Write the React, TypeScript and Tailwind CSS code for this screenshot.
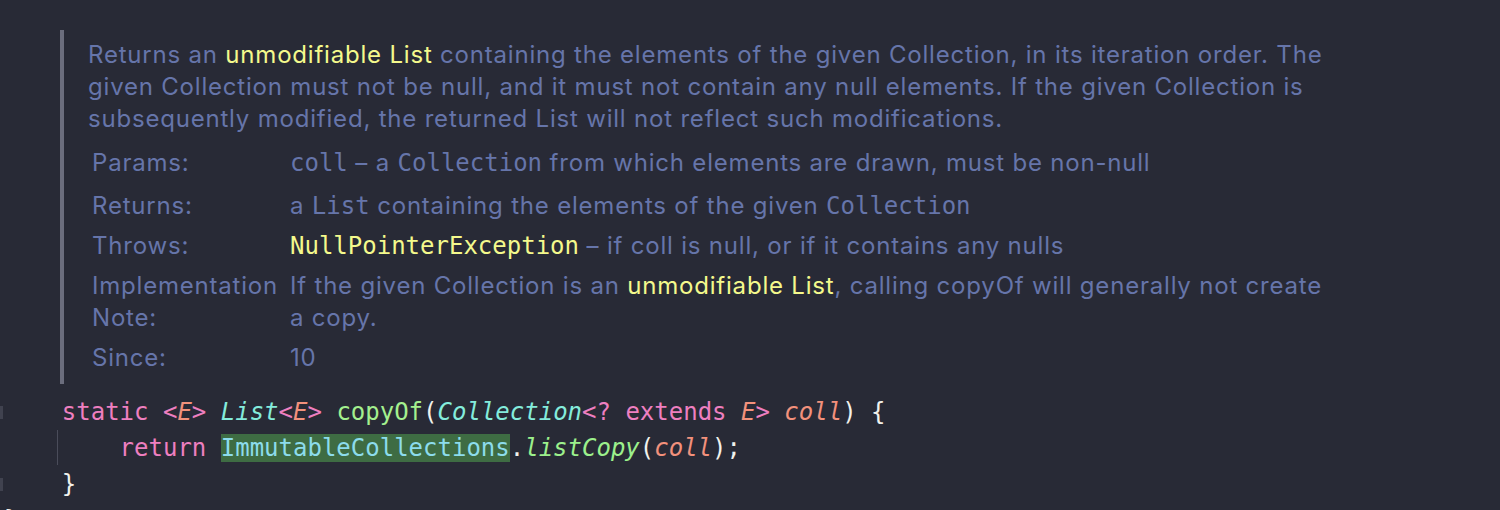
const mono = "font-['DejaVu_Sans_Mono',monospace]"

function Kw({ children }: { children: React.ReactNode }) {
  return <span className="text-[#ee7fc0]">{children}</span>
}
function Ty({ children }: { children: React.ReactNode }) {
  return <span className="italic text-[#84ecdc]">{children}</span>
}
function Tp({ children }: { children: React.ReactNode }) {
  return <span className="italic text-[#f2917c]">{children}</span>
}
function Fn({ children, italic }: { children: React.ReactNode; italic?: boolean }) {
  return <span className={italic ? 'italic text-[#9cf08c]' : 'text-[#a4f08e]'}>{children}</span>
}

function Row({ label, first, children }: { label: React.ReactNode; first?: boolean; children: React.ReactNode }) {
  return (
    <div className={`flex leading-8 ${first ? 'pt-1 pb-[7px]' : 'py-1'}`}>
      <div className="w-[198px] shrink-0">{label}</div>
      <div>{children}</div>
    </div>
  )
}

function Hl({ children }: { children: React.ReactNode }) {
  return <span className="text-[#f4f98c]">{children}</span>
}

function Code({ children }: { children: React.ReactNode }) {
  return <span className={`${mono} text-[24px] tracking-normal`}>{children}</span>
}

function CodeLine({ marker, guide, children }: { marker?: boolean; guide?: boolean; children: React.ReactNode }) {
  return (
    <div className="flex h-9 items-center">
      <div className="w-[4px] shrink-0 flex items-center">
        {marker && <div className="w-[3px] h-[13px] bg-[#40424f]" />}
      </div>
      <div className={`relative whitespace-pre ${mono} text-[24px] leading-9 text-[#f1f1ec]`}>
        {guide && <div className="absolute left-[53px] top-0 h-[35px] w-[1px] bg-[#4a4c5a]" />}
        {children}
      </div>
    </div>
  )
}

export default function App() {
  return (
    <div className="w-[1500px] h-[510px] overflow-hidden bg-[#282a36] pt-[30px] font-['Inter',sans-serif]">
      <div className="ml-[60px] border-l-4 border-[#6b6d7d] pl-6 pt-[9px] pb-[6px] text-[24px] tracking-[0.8px] text-[#6675aa]">
        <div className="leading-8">
          <div>
            Returns an <Hl>unmodifiable List</Hl> containing the elements of the given Collection, in its iteration order. The
          </div>
          <div>given Collection must not be null, and it must not contain any null elements. If the given Collection is</div>
          <div>subsequently modified, the returned List will not reflect such modifications.</div>
        </div>
        <div className="mt-2 pl-1">
          <Row label="Params:" first>
            <Code>coll</Code> – a <Code>Collection</Code> from which elements are drawn, must be non-null
          </Row>
          <Row label="Returns:">
            a <Code>List</Code> containing the elements of the given <Code>Collection</Code>
          </Row>
          <Row label="Throws:">
            <Code>
              <span className="text-[#f4f98c]">NullPointerException</span>
            </Code>{' '}
            – if coll is null, or if it contains any nulls
          </Row>
          <Row
            label={
              <>
                Implementation
                <br />
                Note:
              </>
            }
          >
            If the given Collection is an <Hl>unmodifiable List</Hl>, calling copyOf will generally not create
            <br />a copy.
          </Row>
          <Row label="Since:">10</Row>
        </div>
      </div>

      <div className="mt-[10px]">
        <CodeLine marker>
          {'    '}
          <Kw>static</Kw> <Kw>&lt;</Kw>
          <Tp>E</Tp>
          <Kw>&gt;</Kw> <Ty>List</Ty>
          <Kw>&lt;</Kw>
          <Tp>E</Tp>
          <Kw>&gt;</Kw> <Fn>copyOf</Fn>(<Ty>Collection</Ty>
          <Kw>&lt;?</Kw> <Kw>extends</Kw> <Tp>E</Tp>
          <Kw>&gt;</Kw> <Tp>coll</Tp>) {'{'}
        </CodeLine>
        <CodeLine guide>
          {'        '}
          <Kw>return</Kw> <span className="bg-[#3e6c43] text-[#8cdcec]">ImmutableCollections</span>.
          <Fn italic>listCopy</Fn>(<Tp>coll</Tp>);
        </CodeLine>
        <CodeLine marker>
          {'    '}
          {'}'}
        </CodeLine>
        <CodeLine>{'}'}</CodeLine>
      </div>
    </div>
  )
}
